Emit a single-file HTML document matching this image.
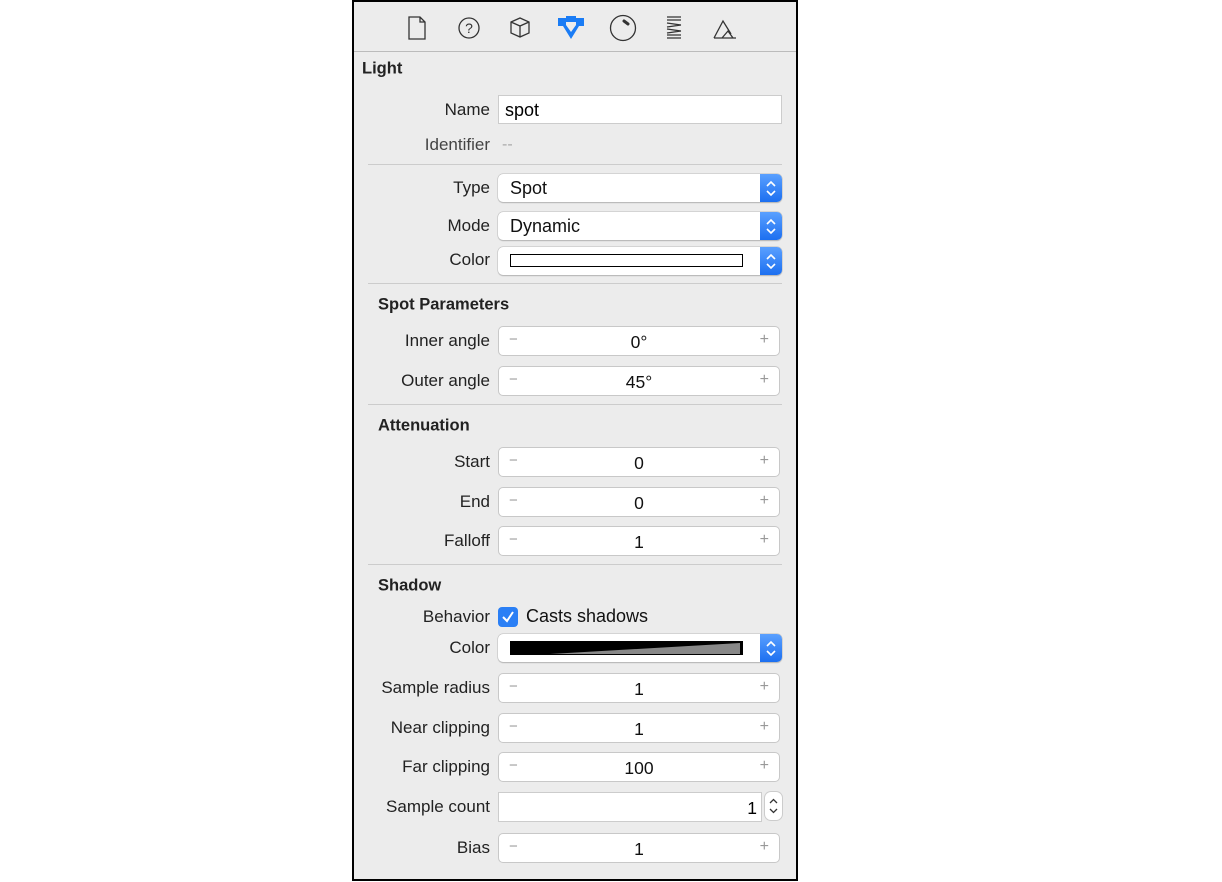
<!DOCTYPE html><html><head><style>
body{margin:0;width:1222px;height:882px;background:#fff;position:relative;font-family:"Liberation Sans",sans-serif;overflow:hidden}
.p{position:absolute;left:352px;top:0;width:442px;height:877px;border:2px solid #000;background:#ececec}
.a{position:absolute}
.l{position:absolute;right:calc(1222px - 490px);font-size:17px;color:#222;transform:translateY(-50%);white-space:nowrap}
.h{position:absolute;font-size:16.5px;font-weight:bold;color:#222;transform:translateY(-50%)}
.sep{position:absolute;left:368px;width:414px;height:1px;background:#ccc}
.f{position:absolute;left:498px;width:284px;height:28px;background:#fff;box-sizing:border-box}
.st{border:1px solid #c8c8c8;border-radius:5px;height:30px;width:282px}
.st .m{position:absolute;left:10px;top:4px;color:#999;font-size:15px}
.st .pl{position:absolute;right:10px;top:4px;color:#999;font-size:16px}
.st .v{position:absolute;left:0;right:0;text-align:center;top:5px;font-size:17.5px;color:#111}
.pop{border-radius:5px;box-shadow:0 0 0 .5px #bbb,0 1px 1px #aaa}
.pop .t{position:absolute;left:12px;top:4px;font-size:18px;color:#111}
.pop .b{position:absolute;right:0;top:0;width:22px;height:100%;background:linear-gradient(#5aa0ff,#1c6ff0);border-radius:0 5px 5px 0}
.pop .b svg{position:absolute;left:5px;top:6px}
</style></head><body>
<div class="p"></div>
<div class="a" style="left:354px;top:51px;width:442px;height:1px;background:#bbb"></div>
<svg class="a" style="left:370px;top:10px" width="400" height="36" viewBox="0 0 400 36" fill="none" stroke="#333" stroke-width="1.3">
<path d="M39 7h11l5 5v17H39z M50 7v5h5"/>
<circle cx="99" cy="18" r="10"/><text x="99" y="23" font-size="14" text-anchor="middle" fill="#333" stroke="none" font-family="Liberation Sans">?</text>
<path d="M141 12l9-4 9 4v11l-9 4-9-4z M141 12l9 4 9-4 M150 16v11"/>
<path d="M188 8h8v-2h10v2h8v8l-5 0-8 13-8-13-5 0z" fill="#1a7cf5" stroke="none"/><path d="M196 12h10v3l-5 7-5-7z" fill="#ececec" stroke="none"/>
<circle cx="253" cy="18" r="12.5"/><path d="M254 11l4 3" stroke-width="3" stroke-linecap="round"/>
<path d="M297 7h14 M297 10h14 M297 13l14 2 M297 17l14-2 M297 19l14 2 M297 23l14-2 M297 25h14 M297 28h14"/>
<path d="M344 28l9-17 8 13 M352 28l6-7 5 7z M344 28h22"/>
</svg>
<div class="h" style="left:362px;top:69px">Light</div>
<div class="l" style="top:110px">Name</div>
<div class="f" style="top:95px;height:29px;border:1px solid #ccc"><span class="a" style="left:6px;top:4px;font-size:18px">spot</span></div>
<div class="l" style="top:145px;color:#444">Identifier</div><div class="a" style="left:502px;top:136px;color:#aaa">--</div>
<div class="sep" style="top:164px"></div>
<div class="l" style="top:188px">Type</div><div class="f pop" style="top:174px"><span class="t">Spot</span><div class="b"><svg width="12" height="17"><path d="M2 6l4-4 4 4M2 11l4 4 4-4" stroke="#fff" stroke-width="1.6" fill="none"/></svg></div></div>
<div class="l" style="top:226px">Mode</div><div class="f pop" style="top:212px"><span class="t">Dynamic</span><div class="b"><svg width="12" height="17"><path d="M2 6l4-4 4 4M2 11l4 4 4-4" stroke="#fff" stroke-width="1.6" fill="none"/></svg></div></div>
<div class="l" style="top:260px">Color</div><div class="f pop" style="top:247px"><div class="a" style="left:12px;top:7px;width:233px;height:13px;border:1.5px solid #000;box-sizing:border-box"></div><div class="b"><svg width="12" height="17"><path d="M2 6l4-4 4 4M2 11l4 4 4-4" stroke="#fff" stroke-width="1.6" fill="none"/></svg></div></div>
<div class="sep" style="top:283px"></div>
<div class="h" style="left:378px;top:305px">Spot Parameters</div>
<div class="l" style="top:341px">Inner angle</div><div class="f st" style="top:326px"><span class="m">−</span><span class="v">0°</span><span class="pl">+</span></div>
<div class="l" style="top:381px">Outer angle</div><div class="f st" style="top:366px"><span class="m">−</span><span class="v">45°</span><span class="pl">+</span></div>
<div class="sep" style="top:404px"></div>
<div class="h" style="left:378px;top:426px">Attenuation</div>
<div class="l" style="top:462px">Start</div><div class="f st" style="top:447px"><span class="m">−</span><span class="v">0</span><span class="pl">+</span></div>
<div class="l" style="top:502px">End</div><div class="f st" style="top:487px"><span class="m">−</span><span class="v">0</span><span class="pl">+</span></div>
<div class="l" style="top:541px">Falloff</div><div class="f st" style="top:526px"><span class="m">−</span><span class="v">1</span><span class="pl">+</span></div>
<div class="sep" style="top:564px"></div>
<div class="h" style="left:378px;top:586px">Shadow</div>
<div class="l" style="top:617px">Behavior</div>
<div class="a" style="left:498px;top:607px;width:20px;height:20px;border-radius:4px;background:#2a7ff5"></div>
<svg class="a" style="left:498px;top:607px" width="20" height="20"><path d="M5 10l4 4 6-9" stroke="#fff" stroke-width="2" fill="none"/></svg>
<div class="a" style="left:526px;top:606px;font-size:18px;color:#111">Casts shadows</div>
<div class="l" style="top:648px">Color</div><div class="f pop" style="top:634px"><svg class="a" style="left:12px;top:7px" width="233" height="14"><rect width="233" height="14" fill="#000"/><path d="M40 13L230 2V13z" fill="#888"/></svg><div class="b"><svg width="12" height="17"><path d="M2 6l4-4 4 4M2 11l4 4 4-4" stroke="#fff" stroke-width="1.6" fill="none"/></svg></div></div>
<div class="l" style="top:688px">Sample radius</div><div class="f st" style="top:673px"><span class="m">−</span><span class="v">1</span><span class="pl">+</span></div>
<div class="l" style="top:728px">Near clipping</div><div class="f st" style="top:713px"><span class="m">−</span><span class="v">1</span><span class="pl">+</span></div>
<div class="l" style="top:767px">Far clipping</div><div class="f st" style="top:752px"><span class="m">−</span><span class="v">100</span><span class="pl">+</span></div>
<div class="l" style="top:807px">Sample count</div>
<div class="f" style="top:792px;width:264px;height:30px;border:1px solid #ccc"><span class="a" style="right:4px;top:5px;font-size:17.5px">1</span></div>
<div class="a" style="left:765px;top:792px;width:17px;height:28px;background:#fff;border-radius:6px;box-shadow:0 0 0 1px #ccc"><svg class="a" style="left:3px;top:5px" width="11" height="18"><path d="M2 6l3.5-3.5 3.5 3.5M2 12l3.5 3.5 3.5-3.5" stroke="#333" stroke-width="1.3" fill="none"/></svg></div>
<div class="l" style="top:848px">Bias</div><div class="f st" style="top:833px"><span class="m">−</span><span class="v">1</span><span class="pl">+</span></div>
</body></html>
